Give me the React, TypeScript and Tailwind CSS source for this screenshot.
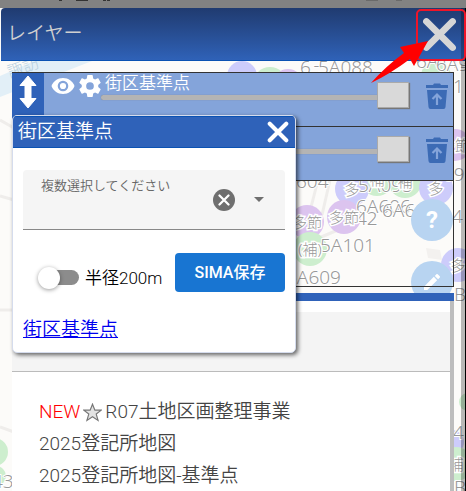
import { useState } from 'react';

type Marker = { x: number; y: number; r: number; fill: string; text?: string };
type Label = { x: number; y: number; text: string };

const LILAC = '#cdccfb';
const PINK = '#dcc4ef';
const GREEN = '#cdeece';

const MARKERS: Marker[] = [
  { x: 242, y: 76, r: 15, fill: LILAC },
  { x: 270, y: 84, r: 17, fill: GREEN },
  { x: 288, y: 84, r: 15, fill: PINK },
  { x: 436, y: 76, r: 15, fill: GREEN },
  { x: 455, y: 145, r: 16, fill: PINK, text: '多節' },
  { x: 377, y: 179, r: 17, fill: GREEN, text: '補' },
  { x: 405, y: 181, r: 17, fill: GREEN, text: '補' },
  { x: 352, y: 189, r: 17, fill: LILAC, text: '多' },
  { x: 436, y: 188, r: 17, fill: LILAC, text: '多' },
  { x: 307, y: 222, r: 17, fill: PINK, text: '多節' },
  { x: 344, y: 217, r: 17, fill: PINK, text: '多節' },
  { x: 310, y: 249, r: 17, fill: GREEN, text: '(補)' },
  { x: 458, y: 265, r: 17, fill: LILAC, text: '多' },
  { x: 468, y: 402, r: 9, fill: GREEN },
  { x: 452, y: 442, r: 12, fill: LILAC },
  { x: 456, y: 464, r: 17, fill: GREEN, text: '補' },
  { x: -6, y: 452, r: 14, fill: GREEN },
  { x: -4, y: 476, r: 10, fill: GREEN },
];

const LABELS: Label[] = [
  { x: 300, y: 74, text: '6三' },
  { x: 318, y: 74, text: '5A088' },
  { x: 416, y: 68, text: '6A112' },
  { x: 436, y: 71, text: '6A9' },
  { x: 453, y: 93, text: '1' },
  { x: 443, y: 181, text: '09' },
  { x: 296, y: 188, text: '604' },
  { x: 358, y: 192, text: '5A095' },
  { x: 356, y: 213, text: '6A606' },
  { x: 382, y: 217, text: '6A607' },
  { x: 356, y: 225, text: '42' },
  { x: 320, y: 252, text: '5A101' },
  { x: 452, y: 223, text: '4' },
  { x: 286, y: 284, text: '6A609' },
  { x: 454, y: 301, text: 'B' },
  { x: 453, y: 439, text: '4' },
  { x: 454, y: 494, text: 'B' },
  { x: -8, y: 488, text: '43' },
];

const MapCanvas = () => (
  <svg
    className="absolute inset-0 h-full w-full bg-[#fcfbf9] font-['Noto_Sans','Noto_Sans_CJK_JP',sans-serif] font-light"
    aria-hidden="true"
  >
    <path d="M0 76L34 61H92L0 97Z" fill="#e2eff7" />
    <text x="10" y="78" fontSize="16" fill="#b7cfe0" transform="rotate(-20 10 78)">諏訪</text>
    <g fill="none" stroke="#efedeb" strokeWidth="3">
      <path d="M0 120L14 128M0 196L14 200M0 310H14M0 427L14 432" />
      <path d="M318 180L300 250M330 180L322 215M300 246L352 224" />
    </g>
    <path d="M426 248L440 250L442 260L428 258Z" fill="#f3f1ef" />
    {MARKERS.map((m, i) => (
      <circle key={i} cx={m.x} cy={m.y} r={m.r} fill={m.fill} />
    ))}
    <g fill="#999" stroke="#fff" strokeWidth="2" paintOrder="stroke" fontSize="19">
      {LABELS.map((l, i) => (
        <text key={i} x={l.x} y={l.y}>{l.text}</text>
      ))}
      {MARKERS.filter((m) => m.text).map((m, i) => (
        <text key={i} x={m.x} y={m.y + 6} fontSize="15" strokeWidth="3" textAnchor="middle">
          {m.text}
        </text>
      ))}
    </g>
  </svg>
);

const CrossIcon = ({ className }: { className: string }) => (
  <svg viewBox="0 0 32 32" className={className} aria-hidden="true">
    <path d="M4 4L28 28M28 4L4 28" stroke="currentColor" strokeWidth="6" strokeLinecap="round" />
  </svg>
);

const TrashIcon = () => (
  <svg viewBox="0 0 24 26" className="h-[26px] w-6" aria-hidden="true">
    <path d="M1 2H8L9 0.5H15L16 2H23V5H1Z" fill="#3c6bb5" />
    <path d="M2 7H22L20.5 24Q20.4 26 18.5 26H5.5Q3.6 26 3.5 24Z" fill="#3c6bb5" />
    <path d="M12 22V12M7.5 16L12 11.5L16.5 16" fill="none" stroke="#84a4da" strokeWidth="2.2" />
  </svg>
);

const EyeIcon = () => (
  <svg viewBox="0 0 24 18" className="h-[18px] w-6" aria-hidden="true">
    <path
      d="M12 1C6.500 1 2.200 4.300 .5 9C2.200 13.700 6.500 17 12 17S21.800 13.700 23.500 9C21.800 4.300 17.500 1 12 1Z"
      fill="#fff"
    />
    <circle cx="12" cy="9" r="4.200" fill="#fff" stroke="#84a4da" strokeWidth="2.200" />
  </svg>
);

const GearIcon = () => (
  <svg viewBox="2 2 20 20" className="size-[22px]" aria-hidden="true">
    <path
      fill="#fff"
      d="M12 15.500A3.500 3.500 0 0 1 8.500 12 3.500 3.500 0 0 1 12 8.500a3.500 3.500 0 0 1 3.500 3.500 3.500 3.500 0 0 1-3.500 3.500m7.430-2.530c.04-.32.07-.64.07-.97s-.03-.66-.07-1l2.110-1.630c.19-.15.24-.42.12-.64l-2-3.460c-.12-.22-.39-.31-.61-.22l-2.490 1c-.52-.39-1.060-.73-1.690-.98l-.37-2.650A.506.506 0 0 0 14 2h-4c-.25 0-.46.18-.5.42l-.37 2.650c-.63.25-1.170.59-1.690.98l-2.490-1c-.22-.09-.49 0-.61.22l-2 3.460c-.13.22-.07.49.12.64L4.570 11c-.04.34-.07.67-.07 1s.03.65.07.97l-2.110 1.660c-.19.15-.25.42-.12.64l2 3.460c.12.22.39.3.61.22l2.490-1.010c.52.4 1.060.74 1.690.99l.37 2.650c.04.24.25.42.5.42h4c.25 0 .46-.18.5-.42l.37-2.650c.63-.26 1.170-.59 1.690-.99l2.490 1.010c.22.08.49 0 .61-.22l2-3.460c.12-.22.07-.49-.12-.64z"
    />
  </svg>
);

function LayerRow({ name }: { name: string }) {
  const [opacity, setOpacity] = useState(100);
  return (
    <li className="flex h-[54px] border-t border-[#333] bg-[#84a4da]">
      <button className="flex w-8 shrink-0 justify-center bg-[#2f62b9] pt-0.5" aria-label="並べ替え">
        <svg viewBox="0 0 18 34" className="h-[34px] w-[18px]" aria-hidden="true">
          <path
            d="M9 1L17 10.500H12V23.500H17L9 33L1 23.500H6V10.500H1Z"
            fill="#fff"
            stroke="#fff"
            strokeLinejoin="round"
          />
        </svg>
      </button>
      <button className="ml-[7px] mt-1 flex h-[18px] shrink-0" aria-label="表示">
        <EyeIcon />
      </button>
      <button className="ml-1 mt-[2px] flex h-[22px] shrink-0" aria-label="設定">
        <GearIcon />
      </button>
      <div className="grid min-w-0 flex-1">
        <span className="col-start-1 row-start-1 pl-1 text-[17px] leading-5 text-white">{name}</span>
        <input
          type="range"
          aria-label={`${name} 透過率`}
          value={opacity}
          onChange={(e) => setOpacity(Number(e.target.value))}
          className="col-start-1 row-start-1 mt-2.5 h-7 w-full appearance-none bg-transparent
            [&::-webkit-slider-runnable-track]:h-[5px] [&::-webkit-slider-runnable-track]:rounded-full
            [&::-webkit-slider-runnable-track]:bg-[#b4b4b4]
            [&::-webkit-slider-runnable-track]:shadow-[0_0_1px_#777]
            [&::-webkit-slider-thumb]:mt-[-13px] [&::-webkit-slider-thumb]:h-[26px]
            [&::-webkit-slider-thumb]:w-8 [&::-webkit-slider-thumb]:appearance-none
            [&::-webkit-slider-thumb]:border [&::-webkit-slider-thumb]:border-[#aaa]
            [&::-webkit-slider-thumb]:bg-[#d9d9d9] [&::-webkit-slider-thumb]:shadow-[1px_1px_1px_#777]"
        />
      </div>
      <button className="ml-4 mr-1 mt-[10px] flex h-[26px] shrink-0" aria-label={`${name} 削除`}>
        <TrashIcon />
      </button>
    </li>
  );
}

function PointDialog() {
  const [radius, setRadius] = useState(false);
  return (
    <section className="absolute left-3 top-[115px] w-[284px] overflow-hidden rounded-[5px] border border-[#d5dced] bg-white pb-2 shadow-[2px_2px_4px_#0009]">
      <header className="flex h-8 items-center justify-between border-y border-[#0b52b3] bg-[#2f62b9] pl-[5px] pr-1.5 text-white">
        <h2 className="text-[19px] leading-7">街区基準点</h2>
        <button className="flex" aria-label="閉じる">
          <CrossIcon className="size-[22px]" />
        </button>
      </header>
      <div className="mx-2.5 mt-[22px] flex h-[60px] items-center rounded-t border-b border-[#888] bg-[#f5f5f5] pl-[18px] pr-3.5">
        <label htmlFor="points" className="flex-1 self-start pt-1.5 text-[13px] leading-5 text-[#666]">
          複数選択してください
        </label>
        <button className="flex size-[22px] items-center justify-center rounded-full bg-[#6f6f6f] text-white" aria-label="クリア">
          <CrossIcon className="size-3" />
        </button>
        <button id="points" className="ml-3 flex size-6 items-center justify-center" aria-label="選択肢を開く">
          <svg viewBox="0 0 10 5" className="h-[5px] w-2.5" aria-hidden="true">
            <path d="M0 0H10L5 5Z" fill="#6f6f6f" />
          </svg>
        </button>
      </div>
      <div className="mx-2.5 mt-[23px] flex h-[39px]">
        <label className="flex flex-1 items-center gap-1.5 pl-4 pt-2.5 text-[17px] leading-6 text-black">
          <input
            type="checkbox"
            role="switch"
            checked={radius}
            onChange={(e) => setRadius(e.target.checked)}
            className="flex h-[15px] w-10 appearance-none items-center rounded-full bg-[#8c8c8c] before:-ml-px before:size-[22px] before:rounded-full before:bg-white before:shadow-[0_1px_4px_#0006] checked:before:ml-5"
          />
          半径200m
        </label>
        <button className="w-[110px] rounded bg-[#1875d2] text-base font-medium text-white">SIMA保存</button>
      </div>
      <p className="ml-2.5 mt-6 text-[19px] leading-7">
        <a href="#points" className="text-[#0000ee] underline">街区基準点</a>
      </p>
    </section>
  );
}

const PencilIcon = () => (
  <svg viewBox="3 3 18 18" className="size-4" aria-hidden="true">
    <path
      fill="#fff"
      d="M3 17.250V21h3.750L17.810 9.940l-3.750-3.750L3 17.250zM20.710 7.040a1 1 0 0 0 0-1.410l-2.340-2.340a1 1 0 0 0-1.410 0l-1.830 1.830 3.750 3.750 1.830-1.830z"
    />
  </svg>
);

export default function App() {
  return (
    <div className="relative min-h-screen overflow-hidden font-['Roboto','Noto_Sans_CJK_JP',sans-serif] font-[350]">
      <MapCanvas />
      <button className="absolute right-[13px] top-[199px] size-[42px] rounded-full bg-[#b8d4f1] text-2xl font-bold text-white">
        ?
      </button>
      <button className="absolute right-[13px] top-[261px] flex size-[42px] items-center justify-center rounded-full bg-[#b8d4f1]" aria-label="編集">
        <PencilIcon />
      </button>

      <div className="relative flex min-h-screen flex-col">
        <div className="h-2 bg-[#828282]">
          <svg className="h-2 w-full" aria-hidden="true">
            <path d="M59 0h3v1h-3zM76 0h12v1H76zM103 0h3v1h-3zM107 0h3v1h-3z" fill="#333" />
            <path d="M366 0h12v1h-12zM396 0h6v1h-6z" fill="#6a6a6a" />
          </svg>
        </div>
        <header className="ml-px flex h-[53px] items-center justify-between rounded-tl border-b border-[#0b52b3] bg-linear-to-b from-[#203b70] to-[#2f62b8] pl-1.5 pr-[9px]">
          <h1 className="text-[19px] leading-7 text-[#d0d0d0]">レイヤー</h1>
          <button className="flex text-[#d6d6d6]" aria-label="閉じる">
            <CrossIcon className="size-[35px]" />
          </button>
        </header>

        <main className="ml-3 mr-3 mt-[11px] flex flex-1 flex-col">
          <ul className="border-b border-r border-[#333]">
            <LayerRow name="街区基準点" />
            <LayerRow name="" />
          </ul>
          <div className="h-[106px] border-b border-r border-[#333]" />
          <div className="mt-1.5 h-2 bg-[#2f62b9]" />
          <div className="flex-1 border-r-4 border-[#bdbdbd] bg-white">
            <div className="h-[71px] border-b border-t-[11px] border-b-[#bbb] border-t-white bg-[#f4f4f4]" />
            <ul className="pl-[27px] pt-6 text-[19px] leading-8 text-[#444]">
              <li className="flex items-center">
                <span className="text-[#f00]">NEW</span>
                <svg viewBox="0 0 24 24" className="mx-[3px] size-[19px]" aria-hidden="true">
                  <path
                    d="M12 1.500L15 9H23L16.700 14L19 22L12 17.300L5 22L7.300 14L1 9H9Z"
                    fill="#e3e3e3"
                    stroke="#777"
                    strokeWidth="1.500"
                  />
                </svg>
                R07土地区画整理事業
              </li>
              <li>2025登記所地図</li>
              <li>2025登記所地図-基準点</li>
            </ul>
          </div>
        </main>
      </div>

      <PointDialog />
      <div className="absolute bottom-0 right-0 top-2 w-[5px] border-l-4 border-r border-l-[#0004] border-r-black" />
      <svg viewBox="0 0 96 84" className="pointer-events-none absolute right-0 top-0 h-[84px] w-24" aria-hidden="true">
        <rect x="47" y="10" width="48" height="50" rx="4" fill="none" stroke="#f01428" strokeWidth="2" />
        <path d="M1 83Q16 66 34 53L30 47L58 41L44 66L40 59Q20 74 1 83Z" fill="#f00" />
      </svg>
    </div>
  );
}
